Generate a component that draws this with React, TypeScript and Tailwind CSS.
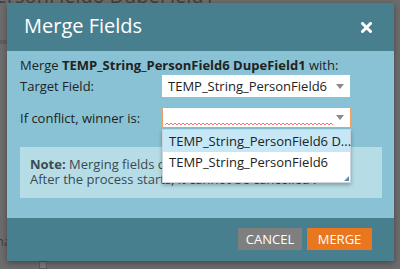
import React from 'react';

const Arrow: React.FC = () => (
  <svg width="8" height="5" viewBox="0 0 8 5" className="shrink-0">
    <path d="M0 0 L8 0 L4 5 Z" fill="#8a8a8a" />
  </svg>
);

const Squiggle: React.FC = () => {
  let d = 'M0 2';
  for (let x = 2; x <= 168; x += 2) d += ` L${x} ${(x / 2) % 2 === 0 ? 2 : 0}`;
  return (
    <svg width="170" height="3" className="absolute left-[2px] bottom-[1px]">
      <path d={d} fill="none" stroke="#f0706c" strokeWidth="1" />
    </svg>
  );
};

const App: React.FC = () => {
  return (
    <div
      className="relative w-[400px] h-[269px] overflow-hidden bg-[#6c6c6c]"
      style={{ fontFamily: '"Open Sans", "Liberation Sans", sans-serif' }}
    >
      {/* page behind the dialog */}
      <div className="absolute right-[185px] top-[-19px] text-[20px] text-[#3f3f3f] whitespace-nowrap">
        TEMP_String_PersonField6 DupeField1
      </div>
      <div className="absolute left-0 top-[40px] w-[7px] h-[4px] bg-[#5f5f5f]" />
      <div className="absolute left-[-4px] top-[232px] text-[13px] text-[#3f3f3f]">na</div>
      <div className="absolute left-[39px] top-[261px] w-[8px] h-[8px] bg-[#7c7c7c] border border-[#5a5a5a]" />

      <div className="relative ml-[7px] mt-[3px] w-[387px] shadow-[0_2px_6px_rgba(0,0,0,0.35)]">
        {/* header */}
        <div className="h-[48px] bg-[#477f8f] flex items-center justify-between pl-[17px] pr-[22px]">
          <span className="text-[20px] text-white leading-none pb-[3px]">Merge Fields</span>
          <svg width="11" height="11" viewBox="0 0 11 11">
            <path d="M1.5 1.5 L9.5 9.5 M9.5 1.5 L1.5 9.5" stroke="white" strokeWidth="3" strokeLinecap="round" />
          </svg>
        </div>

        {/* body */}
        <div className="h-[167px] bg-[#89c2d4] pl-[13px] pr-[12px] pt-[6px] text-[13px] text-[#222]">
          <div className="h-[16px] leading-[16px] whitespace-nowrap">
            Merge <span className="font-bold">TEMP_String_PersonField6 DupeField1</span> with:
          </div>
          <div className="flex items-center h-[22px] mt-[2px]">
            <div className="w-[142px] leading-[16px]">Target Field:</div>
            <div className="w-[188px] h-[22px] bg-white flex items-center justify-between pl-[6px] pr-[6px]">
              <span className="leading-none">TEMP_String_PersonField6</span>
              <Arrow />
            </div>
          </div>
          <div className="flex items-center h-[21px] mt-[10px]">
            <div className="w-[142px] leading-[16px]">If conflict, winner is:</div>
            <div className="relative w-[189px] h-[21px]">
              <div className="relative w-full h-full bg-white border border-[#f0a060] flex items-center justify-end pr-[6px]">
                <Arrow />
                <Squiggle />
              </div>
              <div className="absolute left-0 top-[22px] z-10 w-[189px] h-[54px] bg-white border border-[#c9d6dc] shadow-[0_2px_4px_rgba(0,0,0,0.3)]">
                <div className="h-[22px] bg-[#c6e7f6] pl-[6px] leading-[22px] whitespace-nowrap">
                  TEMP_String_PersonField6 D...
                </div>
                <div className="h-[21px] pl-[6px] leading-[21px] whitespace-nowrap">TEMP_String_PersonField6</div>
                <svg width="5" height="5" viewBox="0 0 5 5" className="absolute right-[1px] bottom-[1px]">
                  <path d="M5 0 L5 5 L0 5 Z" fill="#5b8fb0" />
                </svg>
              </div>
            </div>
          </div>
          <div className="mt-[19px] h-[51px] bg-[#b6dde6] pl-[10px] pt-[10px] text-[#3b4a52] leading-[15px]">
            <div className="whitespace-nowrap">
              <span className="font-bold">Note:</span> Merging fields can take a few minutes.
            </div>
            <div className="whitespace-nowrap">After the process starts, it cannot be cancelled .</div>
          </div>
        </div>

        {/* footer */}
        <div className="h-[43px] bg-[#477f8f] flex items-start justify-end gap-[5px] pt-[10px] pr-[22px]">
          <button className="w-[64px] h-[22px] bg-[#7f7f7f] text-white text-[13px] leading-none">CANCEL</button>
          <button className="w-[65px] h-[22px] bg-[#e8771f] text-white text-[13px] leading-none">MERGE</button>
        </div>
      </div>
    </div>
  );
};

export default App;
